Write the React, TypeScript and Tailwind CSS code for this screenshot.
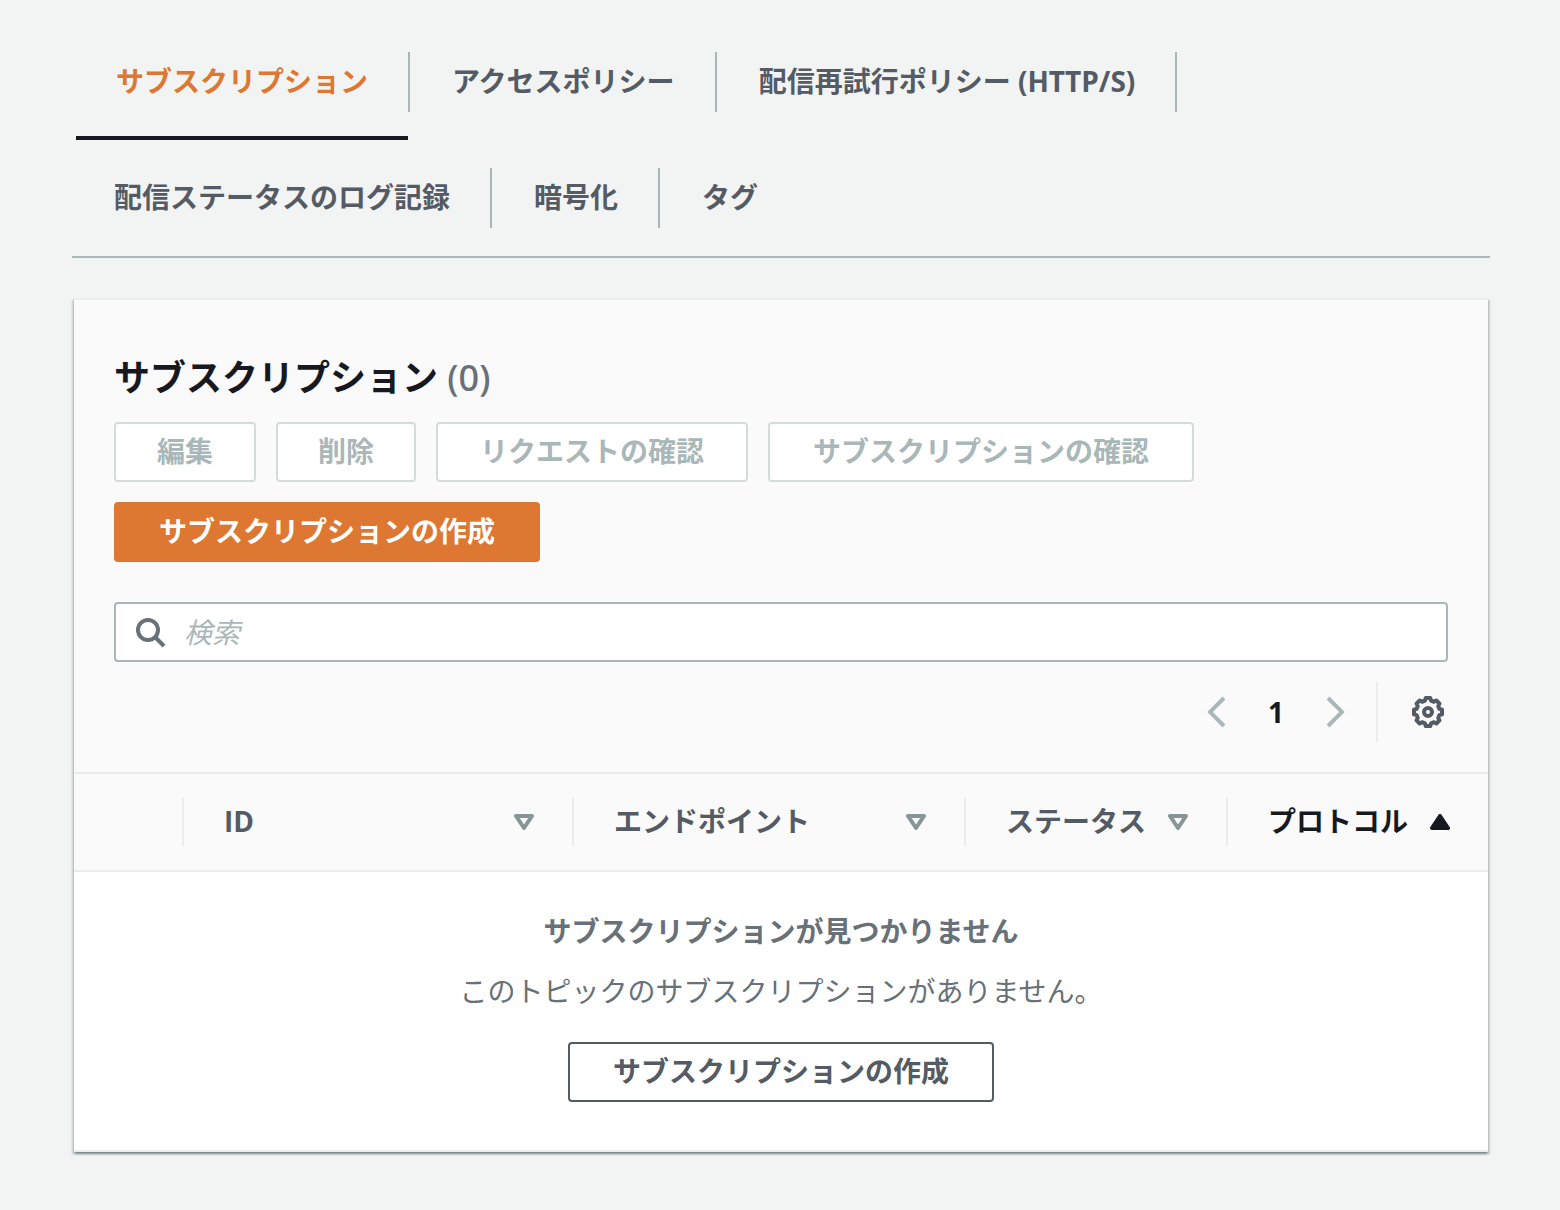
import React, { useState } from 'react';

const FONT = "font-['Open_Sans','Noto_Sans_CJK_JP',sans-serif]";

const tabs = [
  'サブスクリプション',
  'アクセスポリシー',
  '配信再試行ポリシー (HTTP/S)',
  '配信ステータスのログ記録',
  '暗号化',
  'タグ',
];

const actions = [
  { label: '編集', width: 'min-w-[142px]' },
  { label: '削除', width: 'min-w-[140px]' },
  { label: 'リクエストの確認', width: 'min-w-[312px]' },
  { label: 'サブスクリプションの確認', width: 'min-w-[426px]' },
];

const columns = [
  { label: 'ID', width: 'w-[390px]', sorted: false },
  { label: 'エンドポイント', width: '', sorted: false },
  { label: 'ステータス', width: 'w-[262px]', sorted: false },
  { label: 'プロトコル', width: 'w-[260px]', sorted: true },
];

// Eight flat teeth around the hub, four points per tooth
const gearPoints = Array.from({ length: 8 }, (_, i) => i * 45)
  .flatMap((deg) => [
    [deg - 15, 11.8],
    [deg - 9, 14.2],
    [deg + 9, 14.2],
    [deg + 15, 11.8],
  ])
  .map(([deg, r]) => {
    const rad = (deg * Math.PI) / 180;
    return `${(16 + r * Math.cos(rad)).toFixed(2)},${(16 + r * Math.sin(rad)).toFixed(2)}`;
  })
  .join(' ');

const GearIcon = () => (
  <svg viewBox="0 0 32 32" className="w-8 h-8" fill="none" stroke="#545b64" strokeWidth="4" strokeLinejoin="round" aria-hidden="true">
    <polygon points={gearPoints} />
    <circle cx="16" cy="16" r="4" />
  </svg>
);

const SearchIcon = () => (
  <svg viewBox="0 0 32 32" className="w-8 h-8 shrink-0" fill="none" stroke="#687078" strokeWidth="4" aria-hidden="true">
    <circle cx="12" cy="14" r="10" />
    <path d="M19 21l9 9" />
  </svg>
);

const Chevron = ({ flip = false }: { flip?: boolean }) => (
  <svg viewBox="0 0 20 32" className="w-5 h-8" fill="none" stroke="#aab7b8" strokeWidth="4" aria-hidden="true">
    <path d={flip ? 'M2 2l14 14L2 30' : 'M18 2L4 16l14 14'} />
  </svg>
);

const SortIcon = ({ sorted }: { sorted: boolean }) => (
  <svg viewBox="0 0 20 16" className="w-5 h-4 shrink-0" strokeWidth="4" strokeLinejoin="round" aria-hidden="true">
    {sorted ? (
      <path d="M10 2l8 12H2z" fill="#16191f" stroke="#16191f" />
    ) : (
      <path d="M2 2h16l-8 12z" fill="none" stroke="#879596" />
    )}
  </svg>
);

export default function App() {
  const [active, setActive] = useState(tabs[0]);
  const [query, setQuery] = useState('');

  return (
    <div className={`min-h-screen bg-[#f2f3f3] px-[70px] pt-6 pb-14 text-[28px] leading-[38px] text-[#545b64] ${FONT}`}>
      <div className="ml-0.5">
        <nav className="flex flex-wrap border-b-2 border-[#aab7b8]" role="tablist">
          {tabs.map((tab, i) => (
            <div key={tab} className={`relative flex py-7 ${tab === active ? 'ml-1' : 'ml-0.5'}`}>
              <button
                type="button"
                role="tab"
                aria-selected={tab === active}
                onClick={() => setActive(tab)}
                className={`h-[60px] px-10 pb-0.5 font-bold cursor-pointer ${
                  tab === active ? 'text-[#dd7731]' : 'text-[#545b64] hover:text-[#dd7731]'
                }`}
              >
                {tab}
              </button>
              {i < tabs.length - 1 && <div className="w-0.5 bg-[#aab7b8]" />}
              {tab === active && <div className="absolute bottom-0 left-0 right-0.5 h-1 bg-[#16191f]" />}
            </div>
          ))}
        </nav>

        <section className="mx-0.5 mt-10 border-y-2 border-[#eaeded] bg-white shadow-[0_2px_2px_0_rgba(0,28,36,0.3),2px_2px_2px_0_rgba(0,28,36,0.15),-2px_2px_2px_0_rgba(0,28,36,0.15)]">
          <div className="bg-[#fafafa] px-10 pt-[54px] pb-[30px]">
            <h2 className="text-[36px] leading-[48px] font-bold text-[#16191f]">
              サブスクリプション <span className="font-['Noto_Sans',sans-serif] font-medium text-[#687078]">(0)</span>
            </h2>

            <div className="mt-5 flex flex-wrap gap-5">
              {actions.map(({ label, width }) => (
                <button
                  key={label}
                  type="button"
                  disabled
                  className={`h-[60px] pb-0.5 border-2 border-[#d5dbdb] rounded-sm bg-white font-bold text-[#aab7b8] ${width}`}
                >
                  {label}
                </button>
              ))}
              <button type="button" className="h-[60px] min-w-[426px] pb-0.5 rounded-sm bg-[#dd7731] font-bold text-white cursor-pointer">
                サブスクリプションの作成
              </button>
            </div>

            <label className="mt-10 flex h-[60px] items-center gap-4 rounded-sm border-2 border-[#aab7b8] bg-white px-5">
              <SearchIcon />
              <input
                type="search"
                aria-label="検索"
                placeholder="検索"
                value={query}
                onChange={(e) => setQuery(e.target.value)}
                className="w-full bg-transparent text-[#16191f] outline-none placeholder:italic placeholder:text-[#aab7b8]"
              />
            </label>

            <div className="mt-5 flex h-[60px] items-center justify-end">
              <button type="button" disabled aria-label="前のページ">
                <Chevron />
              </button>
              <button type="button" className="w-[100px] font-bold text-[#16191f]">
                1
              </button>
              <button type="button" disabled aria-label="次のページ">
                <Chevron flip />
              </button>
              <div className="ml-[30px] h-full w-0.5 bg-[#eaeded]" />
              <button type="button" aria-label="設定" className="ml-[34px] mr-1 cursor-pointer">
                <GearIcon />
              </button>
            </div>
          </div>

          <table className="w-full table-fixed">
            <thead className="border-y-2 border-[#eaeded] bg-[#fafafa]">
              <tr>
                <th className="w-[110px] py-6">
                  <div className="h-12 border-r-2 border-[#eaeded]" />
                </th>
                {columns.map(({ label, width, sorted }) => (
                  <th key={label} scope="col" className={`py-6 ${width}`}>
                    <div
                      className={`flex h-12 items-center justify-between pl-10 pr-[38px] ${
                        sorted ? 'text-[#16191f]' : 'border-r-2 border-[#eaeded]'
                      }`}
                    >
                      <span className="pb-0.5">{label}</span>
                      <SortIcon sorted={sorted} />
                    </div>
                  </th>
                ))}
              </tr>
            </thead>
            <tbody>
              <tr>
                <td colSpan={5} className="pt-10 pb-12 text-center text-[#687078]">
                  <p className="font-bold">サブスクリプションが見つかりません</p>
                  <p className="mt-[22px]">このトピックのサブスクリプションがありません。</p>
                  <button
                    type="button"
                    className="mt-8 h-[60px] min-w-[426px] pb-0.5 rounded-sm border-2 border-[#545b64] bg-white font-bold text-[#545b64] cursor-pointer"
                  >
                    サブスクリプションの作成
                  </button>
                </td>
              </tr>
            </tbody>
          </table>
        </section>
      </div>
    </div>
  );
}
